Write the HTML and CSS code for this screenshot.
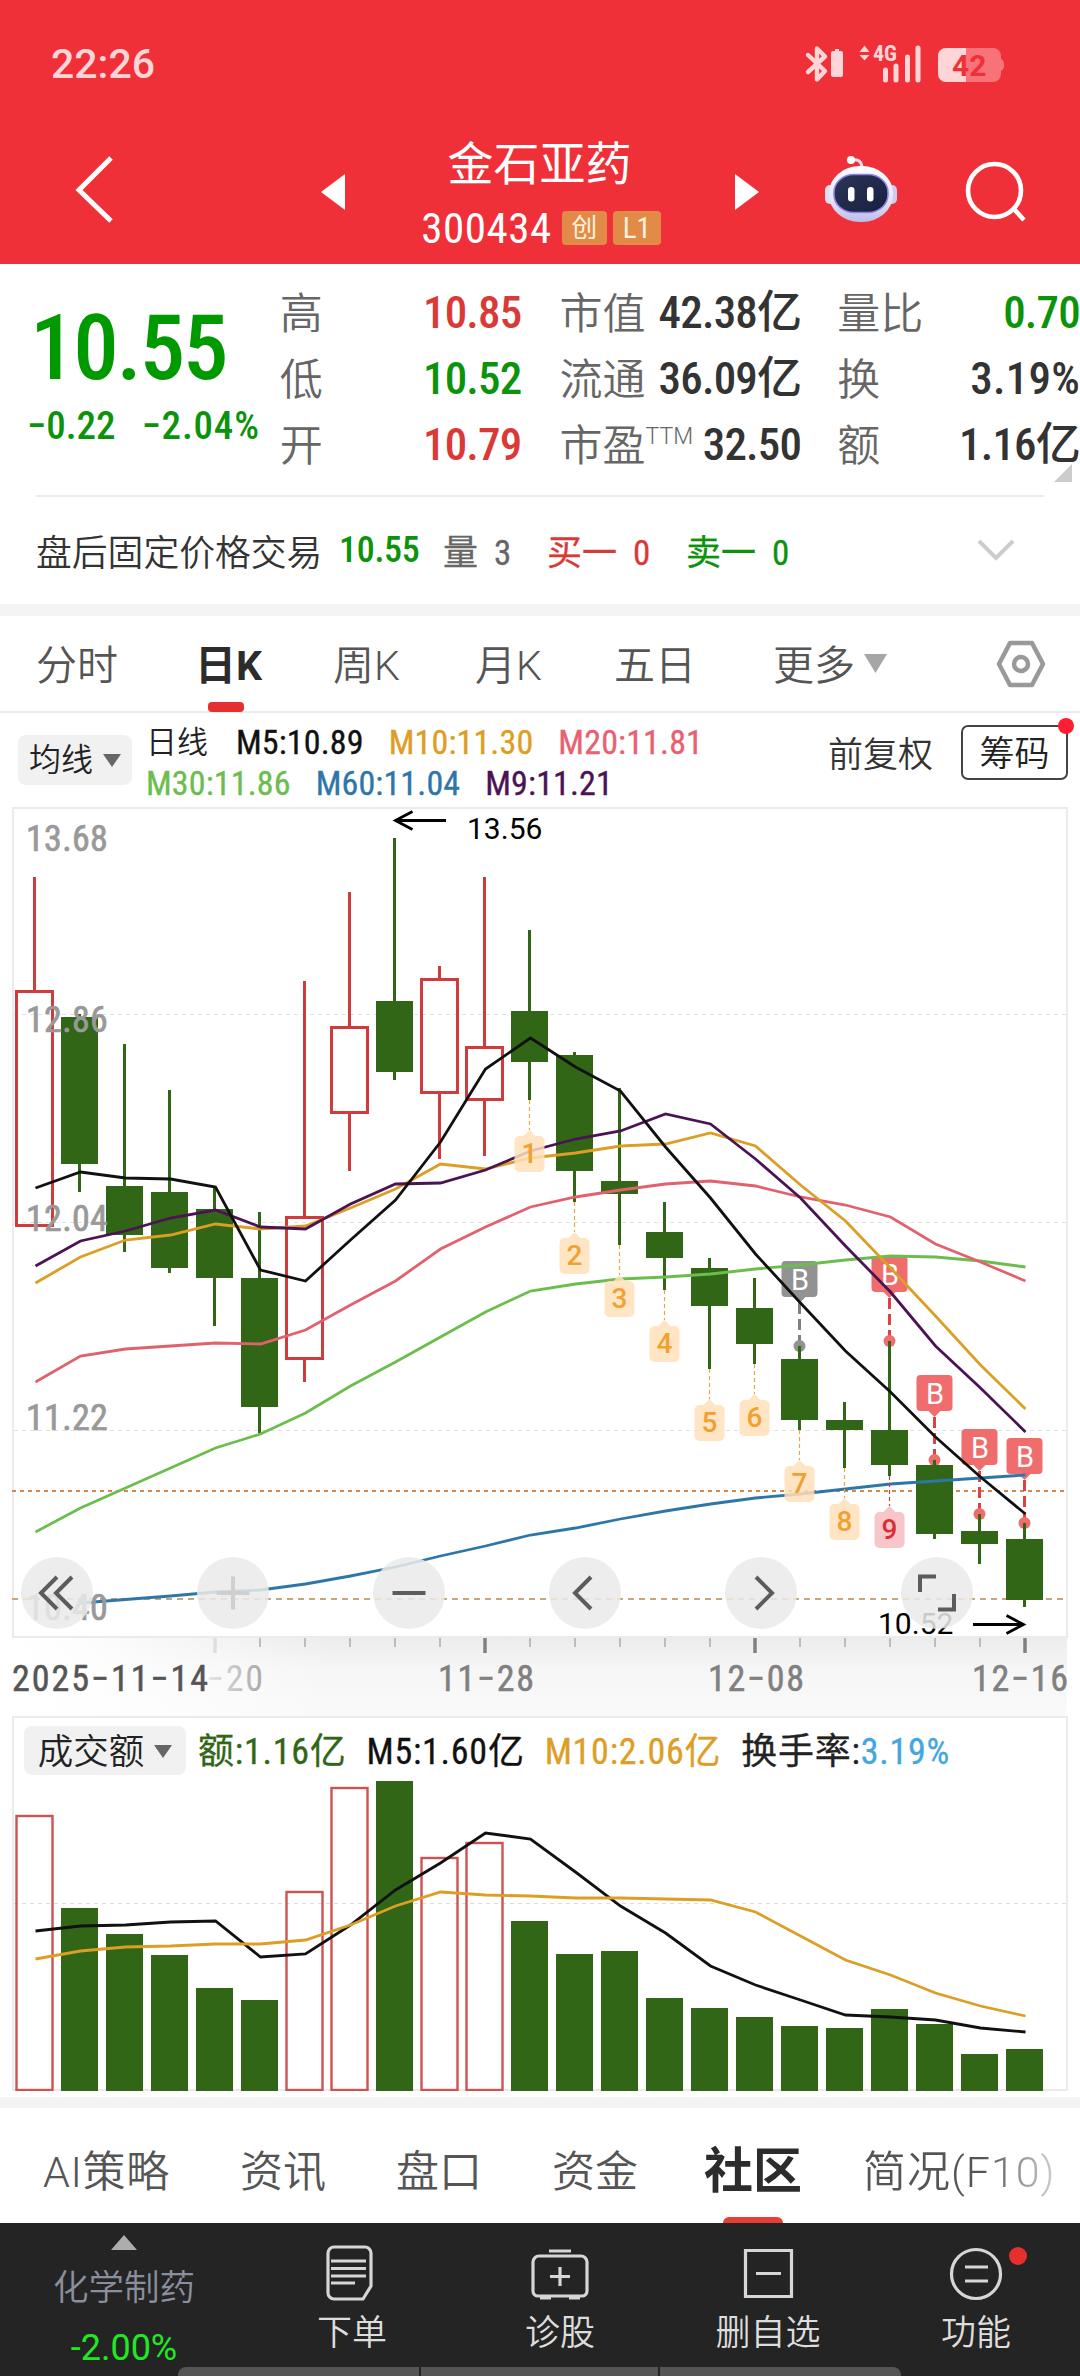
FILE: index.html
```
<!DOCTYPE html>
<html lang="zh-CN">
<head>
<meta charset="utf-8">
<title>金石亚药 300434</title>
<link rel="stylesheet" href="styles.css">
</head>
<body>
<header class="top">
  <div class="status">
    <span class="clock">22:26</span>
    <svg class="status-icons" width="206" height="44" viewBox="802 42 206 44">
      <g fill="none" stroke="#ffd5d7" stroke-width="4.400" stroke-linejoin="round" stroke-linecap="round"><path d="M808 55l17 16-8 8.500V48.500l8 8L808 72"/></g>
      <path d="M833 51h2v-2h4v2h2a2 2 0 0 1 2 2v22a2 2 0 0 1-2 2h-8a2 2 0 0 1-2-2V53a2 2 0 0 1 2-2z" fill="#ffd5d7"/>
      <path d="M859.500 52l5-6.500 5 6.500zM859.500 55l5 5.500 5-5.500z" fill="#ffd5d7"/>
      <text class="net" x="873" y="61">4G</text>
      <path d="M885.500 70v10M896 66v14M907.500 57v23M918 48v32" stroke="#ffd5d7" stroke-width="5" stroke-linecap="round"/>
      <rect x="938" y="48" width="63" height="34" rx="8" fill="#f87378"/>
      <path d="M946 48h20v34h-20a8 8 0 0 1-8-8V56a8 8 0 0 1 8-8z" fill="#ffd5d7"/>
      <path d="M1001 59q3 1 3 6t-3 6z" fill="#f87378"/>
      <text class="batt" x="952" y="76">42</text>
    </svg>
  </div>
  <div class="titlebar">
    <svg class="back" width="44" height="72" viewBox="72 154 44 72"><path d="M111 158L79 190l32 31" fill="none" stroke="#fff" stroke-width="5"/></svg>
    <svg class="prev" width="24" height="36" viewBox="0 0 24 36"><path d="M24 0v36L0 18z" fill="#fff"/></svg>
    <div class="stock">
      <h1>金石亚药</h1>
      <div class="code"><b>300434</b><i>创</i><i class="l1">L1</i></div>
    </div>
    <svg class="next" width="24" height="36" viewBox="0 0 24 36"><path d="M0 0v36l24-18z" fill="#fff"/></svg>
    <svg class="robot" width="76" height="70" viewBox="823 154 76 70">
      <defs>
        <linearGradient id="shell" x1="0" y1="0" x2="0" y2="1"><stop offset="0" stop-color="#fdfdff"/><stop offset=".6" stop-color="#e6e6f8"/><stop offset="1" stop-color="#bcbce9"/></linearGradient>
        <linearGradient id="face" x1="0" y1="0" x2="1" y2="1"><stop offset="0" stop-color="#2d3557"/><stop offset="1" stop-color="#17203f"/></linearGradient>
      </defs>
      <path d="M851 160q10-2 11 7" fill="none" stroke="#f3dfe6" stroke-width="3"/><circle cx="851" cy="160" r="4" fill="#fff"/>
      <rect x="825" y="185" width="12" height="19" rx="5" fill="#dddcf5"/><rect x="885" y="185" width="12" height="19" rx="5" fill="#cfccf2"/>
      <rect x="829" y="166" width="64" height="56" rx="31" ry="27" fill="url(#shell)"/>
      <rect x="834" y="174.500" width="54" height="38" rx="20" ry="18" fill="url(#face)" stroke="#8d83e6" stroke-width="1.600"/>
      <rect x="848" y="187" width="6.500" height="14.500" rx="3.200" fill="#fff"/><rect x="867" y="187" width="6.500" height="14.500" rx="3.200" fill="#fff"/>
    </svg>
    <svg class="search" width="64" height="62" viewBox="964 160 64 62"><g fill="none" stroke="#fff" stroke-width="4.600"><circle cx="994.500" cy="190.500" r="26.500"/><path d="M1013 208l11 12"/></g></svg>
  </div>
</header>

<section class="quote">
  <div class="price">
    <div class="last">10.55</div>
    <div class="chg"><span>−0.22</span><span class="rate">−2.04%</span></div>
  </div>
  <dl class="col c1">
    <div><dt>高</dt><dd class="up">10.85</dd></div>
    <div><dt>低</dt><dd class="down">10.52</dd></div>
    <div><dt>开</dt><dd class="up">10.79</dd></div>
  </dl>
  <dl class="col c2">
    <div><dt>市值</dt><dd>42.38亿</dd></div>
    <div><dt>流通</dt><dd>36.09亿</dd></div>
    <div><dt>市盈<sup>TTM</sup></dt><dd>32.50</dd></div>
  </dl>
  <dl class="col c3">
    <div><dt>量比</dt><dd class="down">0.70</dd></div>
    <div><dt>换</dt><dd class="turn">3.19%</dd></div>
    <div><dt>额</dt><dd>1.16亿</dd></div>
  </dl>
  <svg class="fold" width="18" height="18" viewBox="0 0 18 18"><path d="M18 0v18H0z" fill="#ccc"/></svg>
</section>

<section class="after">
  <span class="a-name">盘后固定价格交易</span><span class="a-price down">10.55</span>
  <span class="a-vol">量 3</span><span class="a-buy">买一 0</span><span class="a-sell">卖一 0</span>
  <svg width="38" height="22" viewBox="0 0 38 22"><path d="M2 2l17 17L36 2" fill="none" stroke="#ccc" stroke-width="4"/></svg>
</section>

<nav class="periods">
  <span>分时</span><span class="on">日K</span><span>周K</span><span>月K</span><span>五日</span><span>更多</span>
  <svg class="caret" width="23" height="19" viewBox="0 0 23 19"><path d="M0 0h23L11.500 19z" fill="#a6a6a6"/></svg>
  <svg class="gear" width="50" height="48" viewBox="0 0 50 48"><g fill="none" stroke="#999" stroke-width="4.500" stroke-linejoin="round"><path d="M14 3h22l11 21-11 21H14L3 24z"/><circle cx="25" cy="24" r="7"/></g></svg>
</nav>

<section class="ma">
  <button class="pick">均线<svg width="18" height="13" viewBox="0 0 18 13"><path d="M0 0h18L9 13z" fill="#666"/></svg></button>
  <div class="legend">
    <div class="row1"><span class="day">日线</span><span class="k5">M5:10.89</span><span class="k10">M10:11.30</span><span class="k20">M20:11.81</span></div>
    <div><span class="k30">M30:11.86</span><span class="k60">M60:11.04</span><span class="k9">M9:11.21</span></div>
  </div>
  <span class="adj">前复权</span>
  <span class="chips">筹码</span>
</section>

<section class="kline">
  <svg id="k" width="1080" height="912" viewBox="0 804 1080 912">
    <defs>
      <linearGradient id="fadeY" x1="0" y1="0" x2="0" y2="1"><stop offset="0" stop-color="#ececec"/><stop offset=".4" stop-color="#f6f6f6"/><stop offset="1" stop-color="#fafafa"/></linearGradient>
      <linearGradient id="fadeX" x1="0" y1="0" x2="1" y2="0"><stop offset="0" stop-color="#fff"/><stop offset=".25" stop-color="#fff" stop-opacity=".85"/><stop offset="1" stop-color="#fff" stop-opacity="0"/></linearGradient>
      <linearGradient id="ink" gradientUnits="userSpaceOnUse" x1="205" y1="0" x2="265" y2="0"><stop offset="0" stop-color="#e8e8e8"/><stop offset="1" stop-color="#a6a6a6"/></linearGradient>
    </defs>
    <rect x="14" y="1638" width="1053" height="78" fill="url(#fadeY)"/>
    <rect x="12" y="1638" width="320" height="78" fill="url(#fadeX)"/>
    <rect x="13" y="808" width="1054" height="829" fill="#fff" stroke="#ebebeb" stroke-width="2"/>
    <path d="M14 1014.500h1052M14 1222.500h1052M14 1430.500h1052" stroke="#e2e2e2" stroke-dasharray="4 4"/>
    <path d="M12 1491h1054" stroke="#d2874b" stroke-width="2" stroke-dasharray="4 4"/>
    <path d="M12 1599h1054" stroke="#c6a67c" stroke-width="2" stroke-dasharray="6 5"/>
    <g id="flags"></g><g id="candles"></g><g id="lines"></g><g id="nums"></g>
    <g class="ylab">
      <text x="26" y="850.500">13.68</text><text x="26" y="1032">12.86</text><text x="26" y="1231">12.04</text><text x="26" y="1430">11.22</text><text x="26" y="1619.500">10.40</text>
    </g>
    <g class="note"><text x="467" y="838.500">13.56</text><text x="878" y="1634">10.52</text></g>
    <path d="M446 820.500H396M412.500 811.500l-17 9 17 9M973 1624.500h50M1006.500 1615.500l17 9-17 9" fill="none" stroke="#000" stroke-width="2.800"/>
    <g id="ticks"></g>
    <g class="dates">
      <text x="206" y="1691" textLength="57" class="faint">−20</text>
      <text x="12" y="1691" textLength="196" class="dark">2025−11−14</text>
      <text x="438" y="1691" textLength="96">11−28</text><text x="708" y="1691" textLength="96">12−08</text><text x="972" y="1691" textLength="96">12−16</text>
    </g>
  </svg>
  <div class="tools">
    <button><svg viewBox="0 0 72 72"><path d="M36 20L20 36l16 16M51 20L35 36l16 16"/></svg></button>
    <button class="off"><svg viewBox="0 0 72 72"><path d="M19.500 36h33M36 19.500v33"/></svg></button>
    <button><svg viewBox="0 0 72 72"><path d="M19.500 36h33"/></svg></button>
    <button><svg viewBox="0 0 72 72"><path d="M42 20L26 36l16 16"/></svg></button>
    <button><svg viewBox="0 0 72 72"><path d="M31 20l16 16-16 16"/></svg></button>
    <button><svg viewBox="0 0 72 72"><path d="M19 35V19.500h16M53 37v15.500H37"/></svg></button>
  </div>
</section>

<section class="vol">
  <div class="volhead">
    <button class="pick">成交额<svg width="18" height="13" viewBox="0 0 18 13"><path d="M0 0h18L9 13z" fill="#666"/></svg></button>
    <span class="v1">额:1.16亿</span><span class="v2">M5:1.60亿</span><span class="v3">M10:2.06亿</span><span class="v4">换手率:<em>3.19%</em></span>
  </div>
  <svg id="v" width="1052" height="311" viewBox="14 1780 1052 311"></svg>
</section>

<nav class="tabs">
  <span class="ai">AI策略</span><span>资讯</span><span>盘口</span><span class="cash">资金</span><span class="on">社区</span><span class="fade">简况(F10)</span>
</nav>

<footer class="bar">
  <div class="cell index">
    <svg width="26" height="15" viewBox="0 0 26 15"><path d="M13 0l13 15H0z" fill="#adadad"/></svg>
    <span class="sector">化学制药</span><span class="pct">-2.00%</span>
  </div>
  <div class="cell"><svg viewBox="0 0 60 60"><path d="M12 4h31a6 6 0 0 1 6 6v33L41 56H12a6 6 0 0 1-6-6V10a6 6 0 0 1 6-6zM9 18h35M9 25.500h35M9 33h35M9 40h24"/></svg><span>下单</span></div>
  <div class="cell"><svg viewBox="0 0 60 60"><path d="M9 13h42a6 6 0 0 1 6 6v29a5 5 0 0 1-5 5H8a5 5 0 0 1-5-5V19a6 6 0 0 1 6-6zM19 8h22M30 24v19M20 33.500h20M10 55h11M39 55h11"/></svg><span>诊股</span></div>
  <div class="cell"><svg viewBox="0 0 60 60"><path d="M7.500 7.500h46v46h-46zM18 30.500h25"/></svg><span>删自选</span></div>
  <div class="cell"><svg viewBox="0 0 60 60"><path d="M54.500 31a24.500 24.500 0 1 1-49 0 24.500 24.500 0 0 1 49 0zM19 24h23M19 38h23"/></svg><span>功能</span><i class="dot"></i></div>
  <div class="home"><i></i><i></i><i></i></div>
</footer>
<script src="chart.js"></script>
</body>
</html>
```
FILE: styles.css
```
* { box-sizing: border-box; }
body {
  margin: 0; width: 1080px; height: 2376px; overflow: hidden; background: #fff; color: #333;
  font-family: Roboto, "Noto Sans CJK SC", sans-serif; font-stretch: 75%; white-space: nowrap;
}
h1, dl, dd { margin: 0; }
i, em { font-style: normal; }
button { border: 0; padding: 0; font: inherit; color: inherit; font-stretch: 75%; }
svg { display: block; flex: none; }
.up { color: #d93a38; }
.down { color: #0c930c; }

.top { height: 264px; background: #f03038; color: #fff; }
.status { display: flex; justify-content: space-between; height: 128px; padding: 42px 72px 0 51px; }
.clock { font-size: 41px; line-height: 44px; font-weight: 500; font-stretch: 100%; color: #ffd5d7; }
.net { font: 700 22px Roboto; font-stretch: 75%; fill: #ffd5d7; }
.batt { font: 700 30px Roboto; fill: #f03038; }
.titlebar { display: flex; height: 136px; align-items: flex-start; }
.back { margin: 26px 0 0 72px; }
.prev { margin: 46px 0 0 205px; }
.stock { width: 390px; text-align: center; }
h1 { font-size: 46px; line-height: 60px; font-weight: 400; margin: 6px 0 0; padding-right: 1px; }
.code { display: flex; justify-content: center; align-items: center; height: 44px; margin-top: 12px; gap: 6px; padding-left: 2px; }
.code b { font-size: 43px; line-height: 44px; font-weight: 450; letter-spacing: .5px; margin-right: 4px; }
.code i { width: 45px; height: 34px; border-radius: 4px; background: #e28b48; color: #fff2dc; font-size: 26px; line-height: 34px; }
.code .l1 { width: 48px; font-size: 29px; }
.next { margin: 46px 0 0 0; }
.robot { margin: 26px 0 0 64px; }
.search { margin: 32px 0 0 65px; }

.quote { position: relative; display: flex; height: 231px; padding-left: 28px; }
.price { width: 252px; color: #009900; }
.last { font-size: 91px; font-weight: 500; line-height: 100px; margin: 34px 0 0 2px; letter-spacing: -2.2px; }
.chg { display: flex; justify-content: space-between; font-size: 39px; line-height: 48px; font-weight: 500; margin: 4px 20px 0 -1px; color: #0c930c; }
.chg .rate { letter-spacing: .8px; }
.col { padding-top: 16px; font-size: 45px; }
.col div { display: flex; justify-content: space-between; height: 66px; line-height: 66px; }
.col dt { position: relative; top: 1px; font-size: 43px; color: #666; font-weight: 350; }
.col dd { font-weight: 500; letter-spacing: -.8px; }
.col .turn { letter-spacing: .2px; }
.c1 { width: 242px; }
.c2 { width: 242px; margin-left: 38px; }
.c3 { width: 243px; margin-left: 36px; }
sup { font-size: 23px; line-height: 0; vertical-align: 17px; font-stretch: 100%; }
.fold { position: absolute; left: 1054px; top: 200px; }

.after { display: flex; align-items: center; margin: 0 36px; height: 109px; padding-bottom: 2px; border-top: 2px solid #ececec; font-size: 36px; }
.a-name { width: 303px; font-size: 35.800px; font-weight: 350; }
.a-price { width: 104px; font-weight: 500; letter-spacing: -.3px; }
.a-vol { width: 104px; color: #666; }
.a-buy { width: 139px; color: #d93a38; }
.a-sell { width: 290px; color: #0c930c; }
.a-vol, .a-buy, .a-sell { font-size: 35px; word-spacing: 8px; -webkit-text-stroke: .3px; }
.after svg { margin-left: 1px; }

.periods { display: flex; align-items: center; height: 109px; border-top: 12px solid #f4f4f4; border-bottom: 2px solid #ebebeb; font-size: 41px; font-weight: 350; font-stretch: 100%; color: #555; padding: 0 0 0 36px; }
.periods span { width: 139px; line-height: 100px; height: 95px; }
.periods span:first-child { width: 159px; }
.periods .on { position: relative; width: 138px; font-weight: 700; font-stretch: 90%; color: #2c2c2c; }
.periods .on::after { content: ""; position: absolute; left: 13px; bottom: -1px; width: 36px; height: 10px; border-radius: 4px; background: #e63030; }
.periods span:nth-child(3) { width: 142px; }
.periods span:nth-child(5) { width: 159px; }
.periods span:nth-child(6) { width: 91px; }
.caret { margin-right: 109px; }

.ma { display: flex; height: 91px; padding-left: 18px; }
.pick { display: flex; align-items: center; justify-content: center; gap: 10px; width: 114px; height: 50px; border-radius: 8px; background: #f1f1f1; font-size: 32px; line-height: 48px; font-weight: 350; color: #222; }
.ma .pick { margin-top: 22px; }
.legend { width: 682px; padding: 9px 0 0 14px; font-size: 34px; line-height: 41px; letter-spacing: .15px; -webkit-text-stroke: .35px; }
.legend div { display: flex; gap: 25px; }
.legend .day { width: 65px; font-size: 31px; font-weight: 350; letter-spacing: 0; color: #222; -webkit-text-stroke: 0; }
.k5, .v2 { color: #111; }
.k10, .v3 { color: #dc9e24; }
.k20 { color: #e8616f; }
.k30 { color: #6bbe4d; }
.k60 { color: #2f76a8; }
.k9 { color: #4b1353; }
.adj { width: 133px; padding-left: 14px; font-size: 35px; font-weight: 350; line-height: 85px; }
.chips { position: relative; width: 107px; height: 55px; margin: 12px 0 0 14px; border: 2px solid #444; border-radius: 7px; text-align: center; font-size: 35px; line-height: 56px; color: #222; font-weight: 350; }
.chips::after { content: ""; position: absolute; right: -8px; top: -9px; width: 16px; height: 16px; border-radius: 50%; background: #ff1f32; }

.kline { position: relative; height: 912px; }
.tools { position: absolute; left: 21px; top: 753px; display: flex; gap: 104px; }
.tools button { width: 72px; height: 72px; border-radius: 50%; background: rgba(234, 234, 234, .86); }
.tools path { fill: none; stroke: #5c5c5c; stroke-width: 4; }
.tools .off path { stroke: #cfcfcf; }
.ylab text { font-size: 36px; letter-spacing: .3px; fill: #999; stroke: #999; stroke-width: .7px; }
.note text { font-size: 30px; font-stretch: 100%; fill: #000; }
.dates text { font-size: 36px; fill: #808080; stroke: #808080; stroke-width: .5px; }
.dates .faint { fill: url(#ink); stroke: none; }
.dates .dark { fill: #555; stroke: #555; }
.num { font-size: 28px; font-weight: 500; font-stretch: 100%; text-anchor: middle; }
.flag { font-size: 29px; font-stretch: 100%; text-anchor: middle; fill: #fff; }

.vol { margin-left: 12px; width: 1056px; height: 375px; border: 2px solid #ebebeb; }
.volhead { display: flex; align-items: center; height: 62px; padding: 7px 0 5px 10px; font-size: 36px; letter-spacing: .75px; }
.volhead .pick { width: 162px; font-size: 35.500px; letter-spacing: 0; height: 49px; margin-right: 12px; padding-top: 3px; }
.volhead span { margin-right: 20px; line-height: 48px; padding-top: 4px; -webkit-text-stroke: .3px; }
.v1 { color: #316616; }
.v4 { color: #222; }
.v4 em { color: #43a6e0; }

.tabs { display: flex; height: 126px; margin-top: 6px; padding-left: 43px; border-top: 11px solid #f4f4f4; font-size: 43px; line-height: 128px; font-weight: 350; font-stretch: 100%; color: #555; }
.tabs span { width: 156px; height: 115px; }
.tabs .ai { width: 197px; font-size: 43px; letter-spacing: .6px; }
.tabs .cash { width: 152px; }
.tabs .on { position: relative; width: 159px; font-size: 49px; font-weight: 700; line-height: 127px; color: #2c2c2c; }
.tabs .on::after { content: ""; position: absolute; left: 19px; bottom: 0; width: 60px; height: 6px; border-radius: 6px 6px 0 0; background: #e83d35; }
.tabs .fade { width: 200px; letter-spacing: 1px; background: linear-gradient(90deg, #555 60%, #ddd); -webkit-background-clip: text; background-clip: text; color: transparent; }

.bar { position: relative; display: grid; grid-template-columns: 248px repeat(4, 208px); height: 153px; background: #242424; color: #ddd; }
.cell { position: relative; display: flex; flex-direction: column; align-items: center; padding-top: 20px; font-size: 35px; font-weight: 350; line-height: 50px; }
.cell svg { width: 60px; height: 60px; }
.cell path { fill: none; stroke: #d6d6d6; stroke-width: 3.200; }
.cell span { margin-top: 6px; }
.index { padding: 12px 0 0; }
.index svg { width: 26px; height: 15px; }
.index path { fill: #adadad; stroke: none; }
.index .sector { color: #8a8f9d; margin-top: 13px; font-size: 35.500px; }
.index .pct { font-size: 36px; font-stretch: 100%; font-weight: 400; color: #22e822; margin-top: 10px; }
.dot { position: absolute; left: 137px; top: 24px; width: 18px; height: 18px; border-radius: 50%; background: #e63030; }
.home { position: absolute; left: 178px; bottom: 0; display: grid; grid-template-columns: 241px 237px 241px; gap: 2px; width: 723px; height: 9px; border-radius: 8px 8px 0 0; overflow: hidden; }
.home i { background: #555; }
```
FILE: chart.js
```
const NS = 'http://www.w3.org/2000/svg';
const GREEN = '#316616', RED = '#d03c3c', ORANGE = '#dc9e24';
const cx = i => 34.5 + 45 * i;

function add(parent, tag, attrs, text) {
  const el = document.createElementNS(NS, tag);
  for (const key in attrs) el.setAttribute(key, attrs[key]);
  if (text !== undefined) el.textContent = text;
  parent.appendChild(el);
  return el;
}
const $ = id => document.getElementById(id);

// high, body top, body bottom, low, rising
const candles = [
  [877,990,1227,1227,1],[1014,1017,1164,1192],[1044,1186,1235,1252],[1090,1192,1268,1273],
  [1187,1209,1278,1326],[1212,1278,1407,1433],[981,1216,1360,1382,1],[892,1026,1114,1171,1],
  [838,1001,1072,1080],[966,978,1094,1159,1],[877,1046,1101,1156,1],[930,1011,1062,1100],
  [1052,1055,1171,1202],[1088,1181,1194,1245],[1202,1232,1258,1290],[1258,1268,1306,1369],
  [1278,1308,1344,1364],[1346,1359,1420,1430],[1402,1420,1430,1468],[1341,1430,1465,1476],
  [1460,1465,1534,1539],[1514,1531,1544,1564],[1523,1539,1600,1607]
];
candles.forEach(([hi, top, bot, lo, rising], i) => {
  const g = $('candles'), x = cx(i), color = rising ? RED : GREEN;
  if (rising) {
    add(g, 'path', { d: `M${x} ${hi}V${top}M${x} ${bot}V${lo}`, stroke: color, 'stroke-width': 3 });
    add(g, 'rect', { x: x - 18, y: top + 1.5, width: 36, height: bot - top - 3, fill: 'none', stroke: color, 'stroke-width': 3 });
  } else {
    add(g, 'path', { d: `M${x} ${hi}V${lo}`, stroke: color, 'stroke-width': 3 });
    add(g, 'rect', { x: x - 18.5, y: top, width: 37, height: bot - top, fill: color });
  }
});

function line(parent, color, ys, start = 0) {
  add(parent, 'polyline', {
    points: ys.map((y, i) => `${cx(i + start) + 1},${y}`).join(' '),
    fill: 'none', stroke: color, 'stroke-width': 2.8
  });
}
const L = $('lines');
line(L, '#2f76a8', [1603,1599.5,1596,1592,1590,1584,1576,1567,1556,1546,1535,1528,1519,1511,1504,1498,1494,1489,1484,1481,1478,1475], 1);
line(L, '#6bbe4d', [1532,1508,1488,1468,1448,1434,1413,1386,1362,1337,1312,1291,1284,1279,1277,1274,1269,1265,1260,1256,1257,1261,1267]);
line(L, '#e0626f', [1382,1356,1349,1346,1343,1344,1330,1305,1281,1249,1227,1207,1197,1190,1184,1181,1186,1197,1205,1217,1244,1262,1281]);
line(L, ORANGE, [1283,1257,1240,1235,1224,1229,1226,1208,1189,1164,1169,1158,1153,1146,1144,1133,1146,1185,1221,1268,1316,1365,1409]);
line(L, '#4b1353', [1266,1241,1231,1218,1210,1227,1229,1204,1184,1183,1170,1151,1139,1131,1114,1124,1159,1198,1246,1292,1346,1388,1432]);
line(L, '#111', [1188,1172,1178,1179,1187,1270,1281,1240,1200,1142,1069,1038,1067,1091,1147,1198,1254,1303,1351,1392,1437,1477,1514]);

// countdown badges hang 30px under each low
for (let n = 1; n <= 9; n++) {
  const i = n + 10, x = cx(i), lo = candles[i][3], y = lo + 30, g = $('nums');
  const last = n === 9;
  add(g, 'path', { d: `M${x} ${lo}V${y}`, stroke: last ? '#d03c3c' : '#e5a83c', 'stroke-width': 1.2, 'stroke-dasharray': '4 3' });
  add(g, 'path', {
    d: `M${x} ${y}l6 6h4a5 5 0 0 1 5 5v26a5 5 0 0 1-5 5h-20a5 5 0 0 1-5-5v-26a5 5 0 0 1 5-5h4z`,
    fill: last ? '#f5bcbf' : '#ffe1b8', 'fill-opacity': .85
  });
  add(g, 'text', { class: 'num', x, y: y + 33, fill: last ? '#dd2c35' : '#f2a02f' }, n);
}

// buy flags stand 85px above each high
[[17, 0], [19, 1], [20, 1], [21, 1], [22, 1]].forEach(([i, red]) => {
  const x = cx(i), hi = candles[i][0], y = hi - 85, g = $('flags');
  const fill = red ? '#f06d6e' : '#929292';
  add(g, 'path', { d: `M${x} ${y + 42}V${hi - 4}`, stroke: red ? '#dd4243' : '#808080', 'stroke-width': 3, 'stroke-dasharray': '11 5' });
  add(g, 'path', { d: `M${x - 14} ${y}h28a4 4 0 0 1 4 4v28a4 4 0 0 1-4 4h-8l-6 6-6-6h-8a4 4 0 0 1-4-4v-28a4 4 0 0 1 4-4z`, fill });
  add(g, 'circle', { cx: x, cy: hi, r: 6, fill });
  add(g, 'text', { class: 'flag', x: x + .5, y: y + 29 }, 'B');
});

for (let i = 4; i <= 22; i++) {
  const major = (i - 4) % 6 === 0;
  add($('ticks'), 'path', {
    d: `M${cx(i) + .5} 1638v${major ? 15 : 9}`,
    stroke: i === 4 ? '#dedede' : major ? '#808080' : '#bdbdbd', 'stroke-width': major ? 3.5 : 2
  });
}

const V = $('v');
add(V, 'path', { d: 'M14 1903.5h1052', stroke: '#dcdcdc', 'stroke-dasharray': '4 4' });
[1815,1908,1934,1955,1988,2000,1891,1787,1781,1857,1842,1921,1954,1951,1998,2008,2017,2026,2028,2009,2024,2054,2049]
  .forEach((y, i) => {
    const x = cx(i);
    if (candles[i][4]) add(V, 'rect', { x: x - 18, y: y + 1, width: 36, height: 2090 - y - 1, fill: 'none', stroke: '#cf5252', 'stroke-width': 2.4 });
    else add(V, 'rect', { x: x - 18.5, y, width: 37, height: 2091 - y, fill: GREEN });
  });
line(V, '#111', [1931,1926,1925,1922,1921,1957,1954,1925,1890,1863,1833,1839,1872,1906,1933,1966,1985,2000,2015,2017,2020,2028,2032]);
line(V, ORANGE, [1959,1951,1947,1946,1944,1944,1940,1925,1906,1892,1895,1896,1898,1898,1899,1900,1912,1936,1960,1975,1993,2006,2016]);
```
